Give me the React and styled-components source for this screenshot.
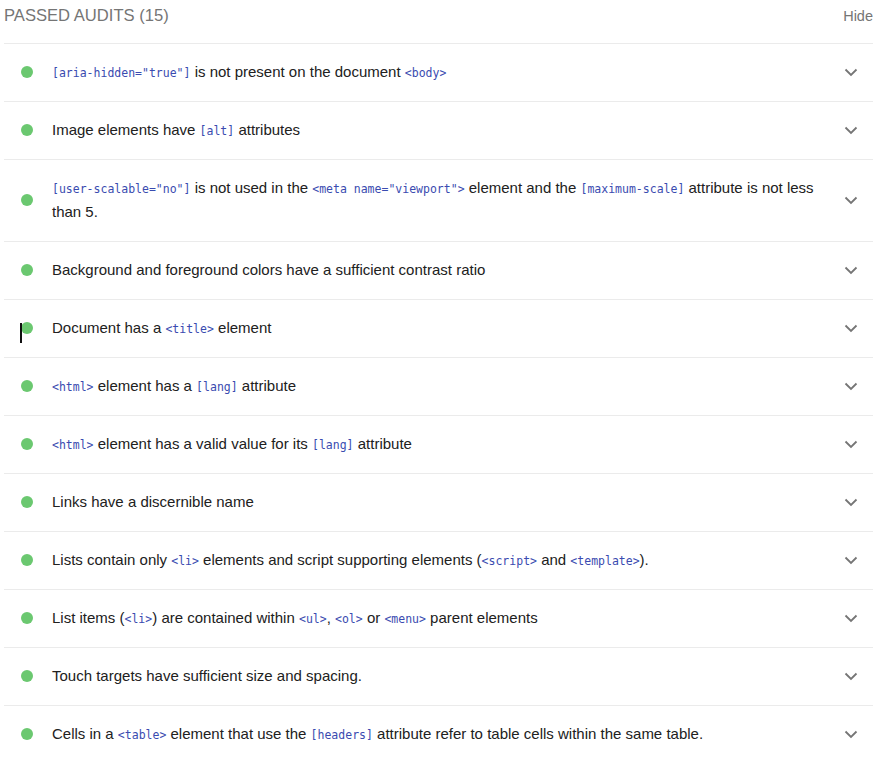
import React from 'react'
import styled, { createGlobalStyle } from 'styled-components'

const GlobalStyle = createGlobalStyle`
  html, body {
    margin: 0;
    padding: 0;
    background: #fff;
  }
  body {
    font-family: "Liberation Sans", Arial, sans-serif;
    color: #212121;
  }
`

const Group = styled.section`
  padding-left: 4px;
`

const Header = styled.div`
  height: 43px;
  box-sizing: border-box;
  padding-top: 6px;
  display: flex;
  align-items: flex-start;
  justify-content: space-between;
  color: #757575;
  line-height: 20px;
`

const Title = styled.span`
  font-size: 16.6px;
  text-transform: uppercase;
`

const Toggle = styled.span`
  font-size: 14.5px;
  cursor: pointer;
`

const Row = styled.div`
  position: relative;
  display: flex;
  align-items: center;
  border-top: 1px solid #ebebeb;
  padding: 16px 0 17px;
  font-size: 15px;
  line-height: 24px;
`

const Dot = styled.span`
  flex: none;
  width: 12px;
  height: 12px;
  border-radius: 50%;
  background: #6bc870;
  margin-left: 17px;
  margin-right: 19px;
`

const Text = styled.div`
  flex: 1;
  padding-right: 10px;
`

const Code = styled.code`
  font-family: "DejaVu Sans Mono", "Liberation Mono", monospace;
  font-size: 11.5px;
  line-height: 1;
  color: #3a4bb0;
`

const Chevron = styled.span`
  flex: none;
  width: 24px;
  display: flex;
  justify-content: center;
  margin-right: 10px;
  color: #757575;
`

const Caret = styled.span`
  position: absolute;
  left: 16px;
  top: 23px;
  width: 2px;
  height: 20px;
  background: #111;
`

const ChevronIcon = () => (
  <svg width="14" height="10" viewBox="0 0 14 10">
    <polyline points="1.5,2.5 7,8 12.5,2.5" fill="none" stroke="currentColor" strokeWidth="1.8" />
  </svg>
)

const audits = [
  <>
    <Code>[aria-hidden="true"]</Code> is not present on the document <Code>&lt;body&gt;</Code>
  </>,
  <>
    Image elements have <Code>[alt]</Code> attributes
  </>,
  <>
    <Code>[user-scalable="no"]</Code> is not used in the <Code>&lt;meta name="viewport"&gt;</Code> element and
    the <Code>[maximum-scale]</Code> attribute is not less than 5.
  </>,
  <>Background and foreground colors have a sufficient contrast ratio</>,
  <>
    Document has a <Code>&lt;title&gt;</Code> element
  </>,
  <>
    <Code>&lt;html&gt;</Code> element has a <Code>[lang]</Code> attribute
  </>,
  <>
    <Code>&lt;html&gt;</Code> element has a valid value for its <Code>[lang]</Code> attribute
  </>,
  <>Links have a discernible name</>,
  <>
    Lists contain only <Code>&lt;li&gt;</Code> elements and script supporting elements (
    <Code>&lt;script&gt;</Code> and <Code>&lt;template&gt;</Code>).
  </>,
  <>
    List items (<Code>&lt;li&gt;</Code>) are contained within <Code>&lt;ul&gt;</Code>,{' '}
    <Code>&lt;ol&gt;</Code> or <Code>&lt;menu&gt;</Code> parent elements
  </>,
  <>Touch targets have sufficient size and spacing.</>,
  <>
    Cells in a <Code>&lt;table&gt;</Code> element that use the <Code>[headers]</Code> attribute refer to
    table cells within the same table.
  </>,
]

const App = () => (
  <>
    <GlobalStyle />
    <Group>
      <Header>
        <Title>Passed audits (15)</Title>
        <Toggle>Hide</Toggle>
      </Header>
      {audits.map((title, i) => (
        <Row key={i}>
          {i === 4 && <Caret />}
          <Dot />
          <Text>{title}</Text>
          <Chevron>
            <ChevronIcon />
          </Chevron>
        </Row>
      ))}
    </Group>
  </>
)

export default App
